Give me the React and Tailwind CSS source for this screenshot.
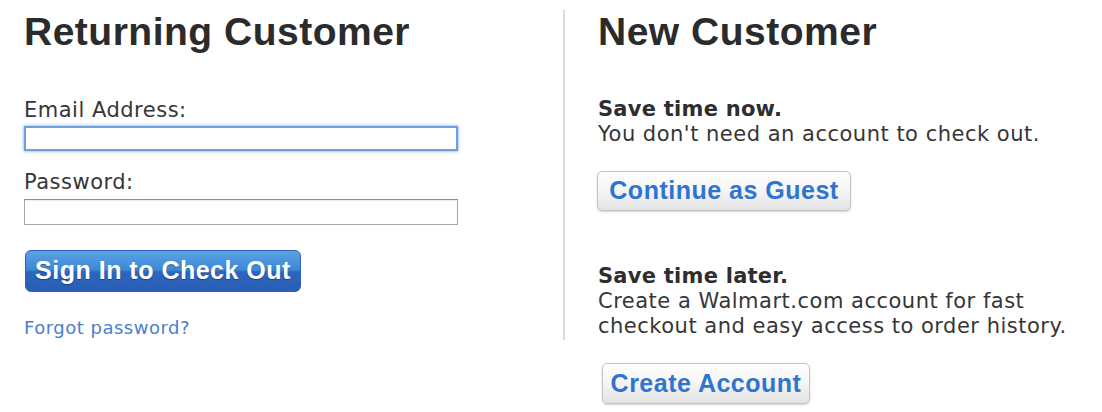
export default function App() {
  const head = "font-['Liberation_Sans',Arial,sans-serif]";
  const body = "font-['DejaVu_Sans',Verdana,sans-serif]";
  const ghost =
    "rounded-[5px] border border-[#c3c3c3] bg-[linear-gradient(to_bottom,#ffffff_0%,#f6f6f6_45%,#e3e3e3_100%)] shadow-[0_1px_2px_rgba(0,0,0,0.18)] text-[#2f74d0] text-[25px] font-bold tracking-[0.5px] flex items-center justify-center";
  return (
    <div className="w-[1102px] h-[412px] bg-white overflow-hidden flex pl-[24px] pt-[10px]">
      {/* Returning customer */}
      <div className="w-[539px] flex flex-col items-start">
        <h1 className={`${head} text-[39px] leading-[44px] font-bold tracking-[0.5px] text-[#2b2b2b]`}>
          Returning Customer
        </h1>
        <label className={`${body} mt-[44px] text-[21px] leading-[24px] tracking-[0.5px] text-[#363636]`}>
          Email Address:
        </label>
        <input
          type="text"
          className="mt-[4px] w-[434px] h-[25px] border-2 border-[#6f9fe0] shadow-[0_0_3px_rgba(90,145,220,0.9)] bg-white outline-none"
        />
        <label className={`${body} mt-[19px] text-[21px] leading-[24px] tracking-[0.5px] text-[#363636]`}>
          Password:
        </label>
        <input
          type="password"
          className="mt-[5px] w-[434px] h-[26px] border border-[#a7a7a7] border-t-[#8f8f8f] shadow-[inset_0_1px_1px_rgba(0,0,0,0.08)] bg-white outline-none"
        />
        <button
          className={`${head} mt-[25px] ml-[1px] w-[276px] h-[42px] rounded-[6px] border border-[#2c62b6] bg-[linear-gradient(to_bottom,#5aa2e3_0%,#428cd9_40%,#3b84d3_48%,#2d66bf_52%,#2a5db4_100%)] text-white text-[25px] font-bold tracking-[0.5px] [text-shadow:0_1px_1px_rgba(0,0,0,0.35)] flex items-center justify-center`}
        >
          Sign In to Check Out
        </button>
        <a className={`${body} mt-[26px] text-[18px] leading-[20px] tracking-[0.5px] text-[#4a80cf]`}>
          Forgot password?
        </a>
      </div>

      {/* Divider */}
      <div className="w-[2px] h-[330px] bg-[#dadada] shrink-0" />

      {/* New customer */}
      <div className="pl-[33px] flex flex-col items-start">
        <h1 className={`${head} text-[39px] leading-[44px] font-bold tracking-[0.5px] text-[#2b2b2b]`}>
          New Customer
        </h1>
        <div className={`${body} mt-[43px] text-[21px] leading-[25px] tracking-[0.5px] text-[#363636]`}>
          <div className="font-bold tracking-[0.25px] text-[#2e2e2e]">Save time now.</div>
          <div>You don't need an account to check out.</div>
        </div>
        <button className={`${head} mt-[24px] ml-[-1px] w-[254px] h-[40px] ${ghost}`}>
          Continue as Guest
        </button>
        <div className={`${body} mt-[53px] text-[21px] leading-[25px] tracking-[0.5px] text-[#363636]`}>
          <div className="font-bold tracking-[0.25px] text-[#2e2e2e]">Save time later.</div>
          <div>Create a Walmart.com account for fast</div>
          <div>checkout and easy access to order history.</div>
        </div>
        <button className={`${head} mt-[24px] ml-[4px] w-[208px] h-[41px] ${ghost}`}>
          Create Account
        </button>
      </div>
    </div>
  );
}
